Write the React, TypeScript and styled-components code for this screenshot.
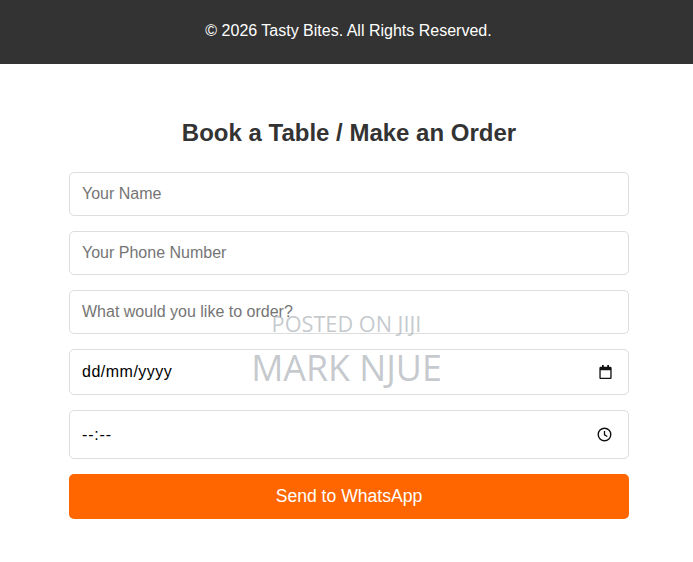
import React from "react";
import styled, { createGlobalStyle } from "styled-components";

const Global = createGlobalStyle`
  html, body { margin: 0; padding: 0; background: #fff; }
  body { font-family: "Liberation Sans", Arial, sans-serif; }
  * { box-sizing: border-box; }
`;

const Page = styled.div`
  position: relative;
  width: 693px;
  height: 562px;
  overflow: hidden;
  background: #fff;
`;

const Footer = styled.footer`
  height: 64px;
  padding: 0 0 2px 4px;
  background: #333333;
  color: #fff;
  font-size: 16px;
  display: flex;
  align-items: center;
  justify-content: center;
`;

const Section = styled.section`
  width: 560px;
  margin-left: 69px;
  padding-top: 55px;
`;

const Title = styled.h2`
  margin: 0 0 25px;
  font-size: 24px;
  line-height: 28px;
  font-weight: 700;
  color: #333;
  text-align: center;
`;

const Form = styled.form`
  display: flex;
  flex-direction: column;
  gap: 15px;
`;

const TextInput = styled.input`
  display: block;
  width: 100%;
  height: 44px;
  padding: 0 12px;
  border: 1px solid #ddd;
  border-radius: 5px;
  outline: none;
  background: #fff;
  font: 16px "Liberation Sans", Arial, sans-serif;
  color: #000;
  &::placeholder { color: #757575; opacity: 1; }
`;

const PickerField = styled.div<{ $h: number; $spacing: number }>`
  height: ${(p) => p.$h}px;
  padding: 0 16px 0 12px;
  border: 1px solid #ddd;
  border-radius: 5px;
  background: #fff;
  display: flex;
  align-items: center;
  justify-content: space-between;
  font-size: 16px;
  letter-spacing: ${(p) => p.$spacing}px;
  color: #000;
`;

const SubmitButton = styled.button`
  height: 45px;
  border: none;
  border-radius: 5px;
  background: #ff6600;
  color: #fff;
  font: 17.6px "Liberation Sans", Arial, sans-serif;
  cursor: pointer;
`;

const Watermark = styled.div`
  position: absolute;
  left: 0;
  right: 0;
  top: 309px;
  display: flex;
  flex-direction: column;
  align-items: center;
  font-family: "Open Sans", "Noto Sans", sans-serif;
  color: rgba(160, 167, 173, 0.62);
  pointer-events: none;
`;

const MarkSmall = styled.div`
  font-size: 21.7px;
  line-height: 30px;
`;

const MarkLarge = styled.div`
  margin-top: 5px;
  font-size: 35.8px;
  line-height: 46px;
`;

const CalendarIcon = () => (
  <svg width="13" height="14" viewBox="0 0 14 16" aria-hidden="true">
    <path
      fill="#111"
      d="M3 0h2v2h4V0h2v2h1.500C13.300 2 14 2.700 14 3.500v11c0 .8-.7 1.500-1.500 1.500h-11C.7 16 0 15.300 0 14.500v-11C0 2.700.7 2 1.500 2H3V0zM1.500 6v8.500h11V6h-11z"
    />
  </svg>
);

const ClockIcon = () => (
  <svg width="15" height="15" viewBox="0 0 16 16" fill="none" aria-hidden="true">
    <circle cx="8" cy="8" r="6.700" stroke="#111" strokeWidth="1.500" />
    <path d="M8 4.200V8.300L11 10.200" stroke="#111" strokeWidth="1.400" />
  </svg>
);

export default function App() {
  return (
    <Page>
      <Global />
      <Footer>© 2026 Tasty Bites. All Rights Reserved.</Footer>
      <Section>
        <Title>Book a Table / Make an Order</Title>
        <Form onSubmit={(e) => e.preventDefault()}>
          <TextInput placeholder="Your Name" />
          <TextInput placeholder="Your Phone Number" />
          <TextInput placeholder="What would you like to order?" />
          <PickerField $h={46} $spacing={0.5}>
            dd/mm/yyyy
            <CalendarIcon />
          </PickerField>
          <PickerField $h={49} $spacing={0.8}>
            --:--
            <ClockIcon />
          </PickerField>
          <SubmitButton type="submit">Send to WhatsApp</SubmitButton>
        </Form>
      </Section>
      <Watermark>
        <MarkSmall>POSTED ON JIJI</MarkSmall>
        <MarkLarge>MARK NJUE</MarkLarge>
      </Watermark>
    </Page>
  );
}
